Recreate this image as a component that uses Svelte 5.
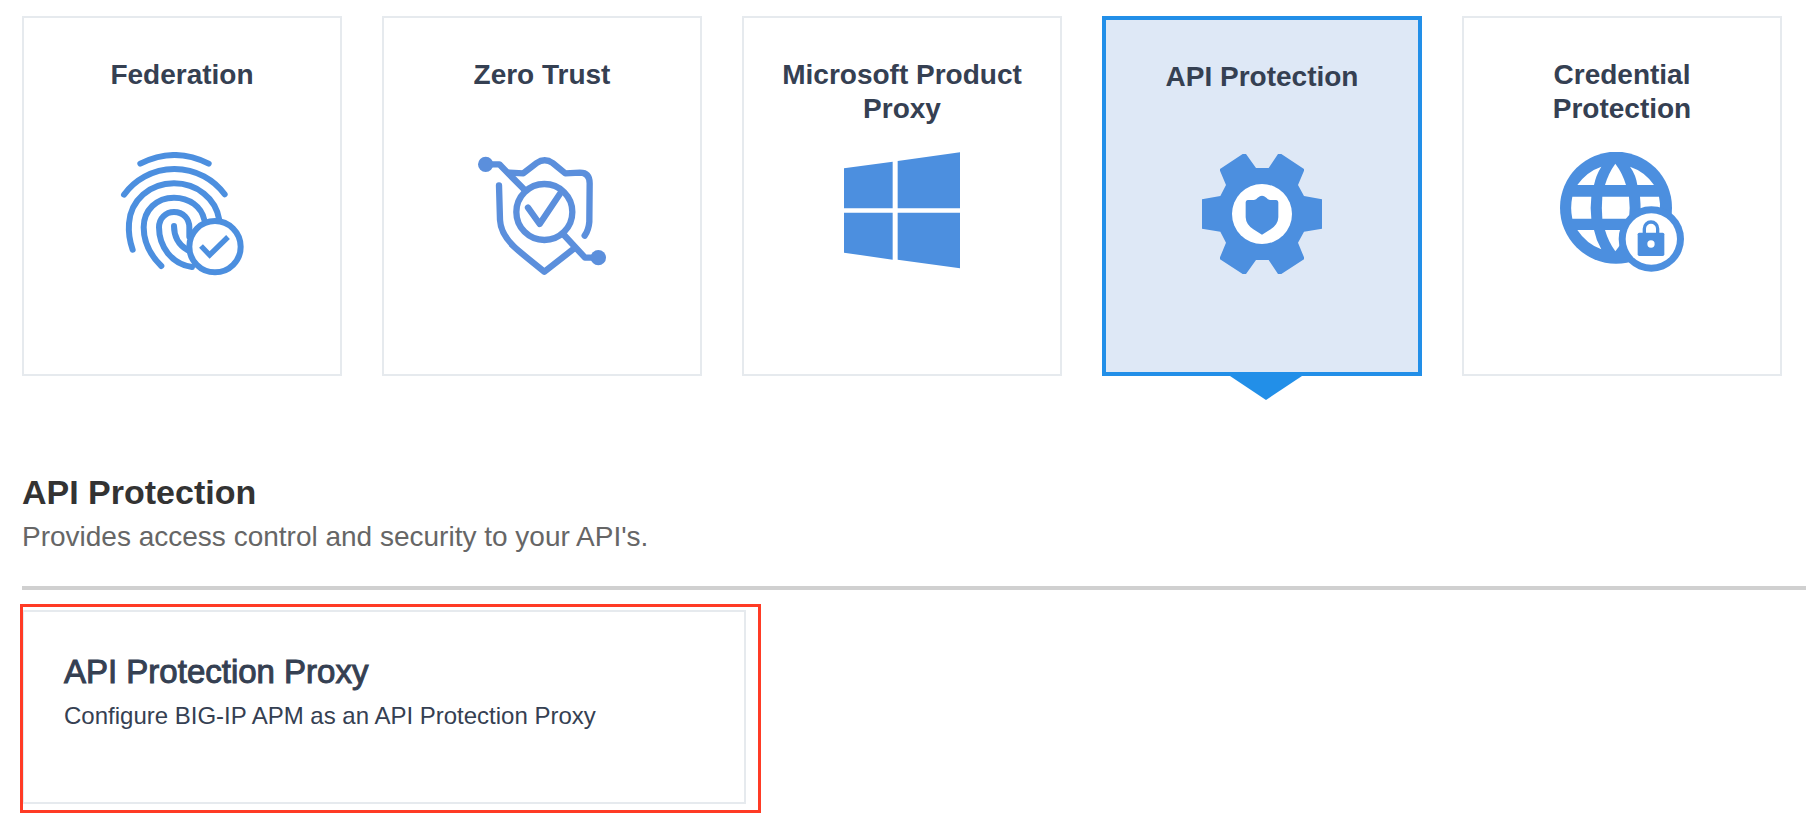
<script>
  const categories = [
    { id: 'federation', title: 'Federation' },
    { id: 'zero-trust', title: 'Zero Trust' },
    { id: 'microsoft', title: 'Microsoft Product Proxy' },
    { id: 'api', title: 'API Protection' },
    { id: 'credential', title: 'Credential Protection' }
  ];
  let selected = $state('api');
</script>

{#snippet icon(id)}
  {#if id === 'federation'}
    <svg class="icon" viewBox="54 36 384 384" fill="none" stroke="#4c8fdf" stroke-width="18" stroke-linecap="round" aria-hidden="true">
      <path d="M121 71Q224 19 326 71" />
      <path d="M72 164A187 187 0 0 1 374 163" />
      <path d="M98 329Q84 290 87 250C92 180 150 130 222 130C290 130 348 175 358 240" />
      <path d="M184 378C150 345 131 305 131 262C131 210 170 173 222 173C268 173 305 200 313 240" />
      <path d="M276 381C215 372 177 320 177 262C177 235 197 216 222 216C250 216 268 237 268 262V290" />
      <path d="M222 258C222 290 237 315 262 330" />
      <circle cx="345" cy="320" r="77" fill="#fff" />
      <path d="M303 318L329 345L384 291" stroke-width="16" stroke-linecap="butt" />
    </svg>
  {:else if id === 'zero-trust'}
    <svg class="icon" viewBox="54 36 384 384" fill="none" stroke="#5b8fdc" stroke-width="19" stroke-linecap="round" stroke-linejoin="round" aria-hidden="true">
      <path d="M77 73H118L192 148" />
      <path d="M148 98L190 100L230 69Q254 52 278 69L316 100L360 98Q389 98 389 130L388 245Q386 270 374 287" />
      <path d="M117 136L120 240Q122 280 160 318Q175 333 253 395L343 325" />
      <path d="M312 285L375 353H415" />
      <circle cx="253" cy="216" r="84" />
      <path d="M204 203L239 252L304 155" />
      <g fill="#5b8fdc" stroke="none">
        <circle cx="77" cy="73" r="23" />
        <circle cx="415" cy="353" r="23" />
      </g>
    </svg>
  {:else if id === 'microsoft'}
    <svg class="icon" viewBox="24 36 384 384" fill="#4c8fdf" aria-hidden="true">
      <path d="M42 85L188 65V205H42ZM203 63L390 37V205H203ZM42 218H188V359L42 338ZM203 218H390V385L203 359Z" />
    </svg>
  {:else if id === 'api'}
    <svg class="icon" viewBox="54 42 384 384" fill="#4c8fdf" aria-hidden="true">
      <path d="M120 87L188 42H198L228 84H266L294 42H304L372 87V92L354 135L372 168L426 178V266L372 275L354 308L372 352V358L304 402H294L266 360H228L198 402H188L120 358V352L138 308L121 275L66 266V178L121 168L138 135L120 92Z" />
      <circle cx="246" cy="222" r="90" fill="#fff" />
      <path d="M203 180H222Q229 179 233 173Q240 167 246 167Q252 167 259 173Q263 179 270 180H289Q295 181 295 187V232Q294 254 272 268L246 284L220 268Q198 254 197 232V187Q197 181 203 180Z" />
    </svg>
  {:else}
    <svg class="icon" viewBox="54 36 384 384" fill="#4c8fdf" aria-hidden="true">
      <circle cx="228" cy="203" r="168" />
      <g fill="#fff">
        <path d="M226 71Q248 100 258 135H195Q205 100 226 71Z" />
        <path d="M184 80Q140 95 112 135H162Q168 105 184 80Z" />
        <path d="M270 80Q288 105 292 135H342Q315 95 270 80Z" />
        <path d="M97 170H154Q150 203 154 236H97Q90 203 97 170Z" />
        <path d="M187 170H267Q271 203 267 236H187Q184 203 187 170Z" />
        <path d="M300 170H357Q362 190 359 215H302Q302 190 300 170Z" />
        <path d="M112 270H162Q168 300 184 328Q140 312 112 270Z" />
        <path d="M195 270H258Q248 308 226 334Q205 305 195 270Z" />
      </g>
      <circle cx="334" cy="297" r="98" />
      <circle cx="334" cy="297" r="77" fill="#fff" />
      <rect x="293" y="278" width="80" height="70" rx="5" />
      <path d="M313 282V266A20 20 0 0 1 353 266V282" fill="none" stroke="#4c8fdf" stroke-width="10" />
      <circle cx="333" cy="312" r="11" fill="#fff" />
    </svg>
  {/if}
{/snippet}

<main>
  <div class="categories">
    {#each categories as c (c.id)}
      <button type="button" class="category" class:active={selected === c.id} aria-pressed={selected === c.id} onclick={() => (selected = c.id)}>
        <span class="name">{c.title}</span>
        {@render icon(c.id)}
      </button>
    {/each}
  </div>

  <section>
    <header>
      <h2>API Protection</h2>
      <p>Provides access control and security to your API's.</p>
    </header>
    <button type="button" class="option">
      <span class="option-title">API Protection Proxy</span>
      <span class="option-text">Configure BIG-IP APM as an API Protection Proxy</span>
    </button>
  </section>
</main>

<style>
  :global(body) {
    margin: 0;
    background: #fff;
  }
  main {
    padding: 16px 0 18px 22px;
    font-family: 'Liberation Sans', Arial, sans-serif;
    color: #354052;
  }
  button {
    box-sizing: border-box;
    margin: 0;
    font: inherit;
    color: inherit;
    background: #fff;
    border: 2px solid #e6eaee;
    border-radius: 0;
    cursor: pointer;
  }
  .categories {
    display: grid;
    grid-template-columns: repeat(5, minmax(0, 1fr));
    gap: 40px;
    padding-right: 24px;
  }
  .category {
    position: relative;
    display: flex;
    flex-direction: column;
    align-items: center;
    justify-content: flex-start;
    gap: 26px;
    min-height: 360px;
    padding: 40px 32px;
  }
  .category.active {
    background: #dee8f6;
    border: 4px solid #228fe8;
  }
  .category.active::after {
    content: '';
    position: absolute;
    top: 100%;
    left: calc(50% - 38px);
    width: 84px;
    height: 28px;
    background: #228fe8;
    clip-path: polygon(0 0, 100% 0, 50% 100%);
  }
  .name {
    min-height: 68px;
    font-size: 28px;
    line-height: 34px;
    font-weight: 700;
    text-align: center;
  }
  .icon {
    display: block;
    width: 128px;
    height: 128px;
    flex: none;
  }
  header {
    margin-top: 96px;
    padding-bottom: 32px;
    border-bottom: 4px solid #d0d0d0;
  }
  h2 {
    margin: 0 0 8px;
    font-size: 34px;
    line-height: 40px;
    font-weight: 700;
    color: #333;
  }
  p {
    margin: 0;
    font-size: 28px;
    line-height: 34px;
    color: #666;
  }
  .option {
    position: relative;
    display: flex;
    flex-direction: column;
    gap: 8px;
    width: 100%;
    max-width: 724px;
    margin-top: 20px;
    padding: 40px 40px 70px;
    text-align: left;
  }
  .option::after {
    content: '';
    position: absolute;
    inset: -8px -17px -11px -4px;
    border: 3px solid #ff3b25;
  }
  .option-title {
    font-size: 33px;
    line-height: 40px;
    -webkit-text-stroke: 1px currentColor;
  }
  .option-text {
    font-size: 24px;
    line-height: 32px;
  }
</style>
